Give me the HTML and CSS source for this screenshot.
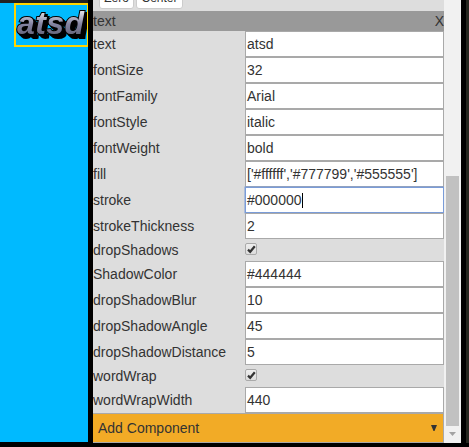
FILE: index.html
```html
<!DOCTYPE html>
<html lang="en">
<head>
<meta charset="utf-8">
<title>Component inspector</title>
<link rel="stylesheet" href="styles.css">
</head>
<body>
<div class="editor">
  <main class="stage">
    <div class="selection">
      <svg class="art" width="71" height="40" viewBox="0 0 71 40">
        <defs>
          <linearGradient id="fill" gradientUnits="userSpaceOnUse" x1="0" y1="2" x2="0" y2="36">
            <stop offset="0" stop-color="#ffffff"/>
            <stop offset=".5" stop-color="#8484a2"/>
            <stop offset="1" stop-color="#555566"/>
          </linearGradient>
        </defs>
        <text class="word" x="1" y="29" textLength="67">atsd</text>
      </svg>
    </div>
  </main>
  <section class="panel">
    <div class="buttons"><button>Zero</button><button>Center</button></div>
    <header class="title"><span>text</span><span class="close">X</span></header>
    <div class="row"><label>text</label><div class="field">atsd</div></div>
    <div class="row"><label>fontSize</label><div class="field">32</div></div>
    <div class="row"><label>fontFamily</label><div class="field">Arial</div></div>
    <div class="row"><label>fontStyle</label><div class="field">italic</div></div>
    <div class="row"><label>fontWeight</label><div class="field">bold</div></div>
    <div class="row"><label>fill</label><div class="field">['#ffffff','#777799','#555555']</div></div>
    <div class="row"><label>stroke</label><div class="field focused">#000000<i class="caret"></i></div></div>
    <div class="row"><label>strokeThickness</label><div class="field">2</div></div>
    <div class="row check"><label>dropShadows</label><span class="box"><svg width="11" height="11" viewBox="0 0 11 11"><path d="M2 5.6 4.2 7.8 8.8 2.2"/></svg></span></div>
    <div class="row"><label>ShadowColor</label><div class="field">#444444</div></div>
    <div class="row"><label>dropShadowBlur</label><div class="field">10</div></div>
    <div class="row"><label>dropShadowAngle</label><div class="field">45</div></div>
    <div class="row"><label>dropShadowDistance</label><div class="field">5</div></div>
    <div class="row check"><label>wordWrap</label><span class="box"><svg width="11" height="11" viewBox="0 0 11 11"><path d="M2 5.6 4.2 7.8 8.8 2.2"/></svg></span></div>
    <div class="row"><label>wordWrapWidth</label><div class="field">440</div></div>
    <div class="add"><span>Add Component</span><svg width="6" height="6" viewBox="0 0 6 6"><path d="M0 0H6L3.5 6H2.5Z"/></svg></div>
  </section>
  <div class="scroll">
    <div class="thumb"></div>
    <svg width="7" height="4" viewBox="0 0 7 4"><path d="M0 0H7L3.5 4Z"/></svg>
  </div>
  <div class="edge"></div>
</div>
</body>
</html>
```
FILE: styles.css
```css
* { box-sizing: border-box; }
body {
  margin: 0;
  background: #000;
  color: #333;
  font: 14px/20px "Liberation Sans", Arial, sans-serif;
  overflow: hidden;
}
.editor {
  display: grid;
  grid-template-columns: 88px 5px 351px 17px 5px 3px;
  width: 469px;
  height: 447px;
}
.stage {
  height: 442px;
  background: #00baff;
  border-top: 3px solid #222;
  display: flex;
  justify-content: flex-end;
  align-items: flex-start;
}
.selection {
  width: 74px;
  height: 44px;
  border: 2px solid #ffd500;
  border-right-width: 1px;
}
.art { display: block; }
.word {
  font: italic bold 32px "Liberation Sans", Arial, sans-serif;
  fill: url(#fill);
  stroke: #000;
  stroke-width: 2px;
  paint-order: stroke;
  filter: drop-shadow(2px 2px 0 #000) drop-shadow(2px 2px 0 #000);
}
.panel { grid-column: 3; height: 443px; background: #ddd; }
.buttons {
  height: 11px;
  padding: 0 0 2px 6px;
  display: flex;
  align-items: flex-end;
  gap: 2px;
  overflow: hidden;
}
.buttons button {
  flex: none;
  height: 22px;
  padding: 0;
  border: 1px solid #ccc;
  border-radius: 3px;
  background: #fff;
  color: #333;
  font: 12px/16px "Liberation Sans", Arial, sans-serif;
}
.buttons button:first-child { width: 35px; }
.buttons button:last-child { width: 47px; }
.title {
  height: 20px;
  background: #999;
  display: flex;
  justify-content: space-between;
  line-height: 21px;
}
.row {
  height: 26px;
  display: grid;
  grid-template-columns: 152px 199px;
  line-height: 26px;
}
.field {
  background: #fff;
  border: 1px solid #a9a9a9;
  padding-left: 1px;
  line-height: 24px;
  white-space: nowrap;
}
.focused { border-color: #7a9cd8; box-shadow: 0 0 0 .5px #7a9cd8; }
.caret {
  display: inline-block;
  width: 1px;
  height: 15px;
  background: #000;
  vertical-align: -3px;
}
.check { height: 22px; line-height: 22px; }
.box {
  width: 12px;
  height: 12px;
  margin-top: 4px;
  border: 1px solid #aaa;
  border-radius: 2px;
  background: linear-gradient(#eee, #ddd);
  line-height: 0;
}
.box svg { display: block; margin: 0 0 0 -.5px; }
.box path { fill: none; stroke: #333; stroke-width: 2.2; }
.add {
  height: 30px;
  border: 1px solid #a9a9a9;
  border-left: 0;
  background: #f2ab26;
  padding: 0 6px 0 5px;
  display: flex;
  align-items: center;
  justify-content: space-between;
}
.add path { fill: #333; }
.scroll {
  grid-column: 4;
  height: 443px;
  background: #f1f1f1;
  padding: 176px 2px 0;
  display: flex;
  flex-direction: column;
  align-items: center;
}
.thumb { width: 13px; height: 250px; background: #c1c1c1; }
.scroll svg { margin-top: 6px; }
.scroll path { fill: #a3a3a3; }
.edge { grid-column: 6; background: #25261f; height: 443px; }
```
